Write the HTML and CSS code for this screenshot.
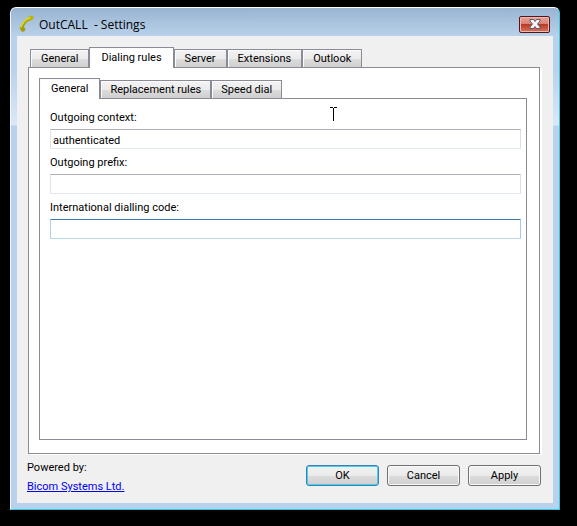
FILE: index.html
```html
<!DOCTYPE html>
<html lang="en">
<head>
<meta charset="utf-8">
<title>OutCALL - Settings</title>
<link rel="stylesheet" href="styles.css">
</head>
<body>
<main class="window">
  <header class="titlebar">
    <svg class="logo" viewBox="0 0 16 18" aria-hidden="true">
      <path d="M3 14C4 8.500 7 5 12 3.500" fill="none" stroke="#aaa300" stroke-width="2.600"/>
      <path d="M.5 12.500L4.500 11L6.500 14.500Q5 17.500 2.500 16.500Z" fill="#a39b00"/>
      <path d="M8.500 2.500L12 .5Q15 1 14.500 3.500L11.500 6Z" fill="#b8b000"/>
      <path d="M2 12.500C3 8.500 6 4.500 11.500 2.500" fill="none" stroke="#ded620" stroke-width="1.400"/>
    </svg>
    <h1 class="title">OutCALL&nbsp; - Settings</h1>
    <button class="close" type="button" aria-label="Close">
      <svg viewBox="0 0 12 10" aria-hidden="true">
        <path d="M1 .5H4.500L6 2.500L7.500 .5H11V2L8.500 5L11 8V9.500H7.500L6 7.500L4.500 9.500H1V8L3.500 5L1 2Z" fill="#f4f4f4" stroke="#555a6c"/>
      </svg>
    </button>
  </header>
  <form class="client">
    <div class="tabs outer" role="tablist">
      <button class="tab" type="button" role="tab">General</button>
      <button class="tab selected" type="button" role="tab" aria-selected="true">Dialing rules</button>
      <button class="tab" type="button" role="tab">Server</button>
      <button class="tab" type="button" role="tab">Extensions</button>
      <button class="tab" type="button" role="tab">Outlook</button>
    </div>
    <section class="pane outer-pane">
      <div class="tabs" role="tablist">
        <button class="tab selected" type="button" role="tab" aria-selected="true">General</button>
        <button class="tab" type="button" role="tab">Replacement rules</button>
        <button class="tab" type="button" role="tab">Speed dial</button>
      </div>
      <section class="pane fields">
        <label for="context">Outgoing context:</label>
        <input id="context" type="text" value="authenticated">
        <label for="prefix">Outgoing prefix:</label>
        <input id="prefix" type="text">
        <label for="code">International dialling code:</label>
        <input id="code" class="active" type="text">
      </section>
    </section>
    <footer class="footer">
      <div class="credit">
        <span>Powered by:</span>
        <a href="#">Bicom Systems Ltd.</a>
      </div>
      <div class="actions">
        <button class="btn default" type="button">OK</button>
        <button class="btn" type="button">Cancel</button>
        <button class="btn" type="button">Apply</button>
      </div>
    </footer>
  </form>
</main>
<svg class="pointer" viewBox="0 0 7 14" aria-hidden="true"><path d="M0 .5H3M4 .5H7M3.500 1V14" stroke="#000" fill="none"/></svg>
</body>
</html>
```
FILE: styles.css
```css
* { box-sizing: border-box; }
body {
  margin: 0;
  min-height: 100vh;
  padding: 7px 17px 16px 10px;
  display: flex;
  background: #000;
  color: #000;
  font: 11px/16px Roboto, "Liberation Sans", sans-serif;
}
button, input { font: inherit; color: inherit; margin: 0; }
.window {
  flex: 1;
  display: flex;
  flex-direction: column;
  padding: 0 6px 6px;
  border: 1px solid;
  border-color: #fff #2fcbe5 #2fcbe5 #f0f6fc;
  border-radius: 6px 6px 0 0;
  background: linear-gradient(#99b4d1, #b9d1ea 28px, #b9d1ea 60px, #dbe8f6 117px, #b9d1ea 118px);
}
.titlebar {
  height: 28px;
  display: flex;
  align-items: center;
  padding: 4px 3px 0 2px;
}
.logo { width: 16px; height: 18px; }
.title {
  flex: 1;
  margin: 2px 0 0 4px;
  font: 12px/18px "Open Sans", "Noto Sans", sans-serif;
}
.close {
  display: grid;
  place-items: center;
  width: 31px;
  height: 17px;
  padding: 0;
  border: 1px solid #551520;
  border-radius: 2px;
  background: linear-gradient(#e6a399, #d98070 48%, #b83c25 50%, #d5745f);
  box-shadow: inset 0 0 0 1px #edb8ae;
}
.close svg { width: 12px; height: 10px; }
.client {
  flex: 1;
  display: flex;
  flex-direction: column;
  padding: 11px 13px 8px 11px;
  background: #f0f0f0;
}
.tabs {
  display: flex;
  align-items: flex-end;
  height: 21px;
  position: relative;
  z-index: 1;
  margin-bottom: -1px;
}
.tab {
  height: 19px;
  padding: 0 9px;
  border: 1px solid #898c95;
  background: linear-gradient(#f3f3f3, #ebebeb 50%, #dddddd 51%, #cfcfcf);
  line-height: 17px;
  white-space: nowrap;
  box-shadow: inset 1px 1px #fbfbfb;
}
.outer { padding-left: 2px; }
.outer .tab { padding: 0 10px; }
.tabs .selected {
  height: 21px;
  padding: 0 11px 1px;
  border-bottom: 0;
  background: #fff;
}
.pane {
  border: 1px solid #898c95;
  background: #fff;
}
.outer-pane {
  flex: 1;
  display: flex;
  flex-direction: column;
  padding: 10px 12px 13px 10px;
  box-shadow: 2px 1px #fff;
}
.fields {
  flex: 1;
  display: flex;
  flex-direction: column;
  padding: 11px 5px 10px 10px;
}
.fields label { margin-bottom: 3px; }
.fields input {
  width: 100%;
  height: 20px;
  margin-bottom: 6px;
  padding: 2px 2px 0;
  border: 1px solid;
  border-color: #abadb3 #dbdfe6 #e3e9ef #e2e3ea;
  border-radius: 1px;
  outline: 0;
  background: #fff;
}
.fields input.active { border-color: #3d7bad #a4c9e3 #b7d9ed #b5cfe7; }
.footer {
  display: flex;
  justify-content: space-between;
  align-items: flex-start;
  margin: 0 -1px;
  padding-top: 6px;
}
.credit {
  display: flex;
  flex-direction: column;
  gap: 3px;
}
.credit a { color: #0000f0; }
.actions {
  display: flex;
  gap: 8px;
  padding-top: 5px;
}
.btn {
  width: 73px;
  height: 21px;
  padding: 0;
  border: 1px solid #707070;
  border-radius: 3px;
  background: linear-gradient(#f2f2f2, #ebebeb 50%, #dddddd 51%, #cfcfcf);
  box-shadow: inset 0 0 0 1px #fafafa;
}
.btn.default {
  border-color: #3c7fb1;
  box-shadow: inset 0 0 0 1px #48d0f0;
}
.pointer {
  position: absolute;
  left: 330px;
  top: 107px;
  width: 7px;
  height: 14px;
}
```
